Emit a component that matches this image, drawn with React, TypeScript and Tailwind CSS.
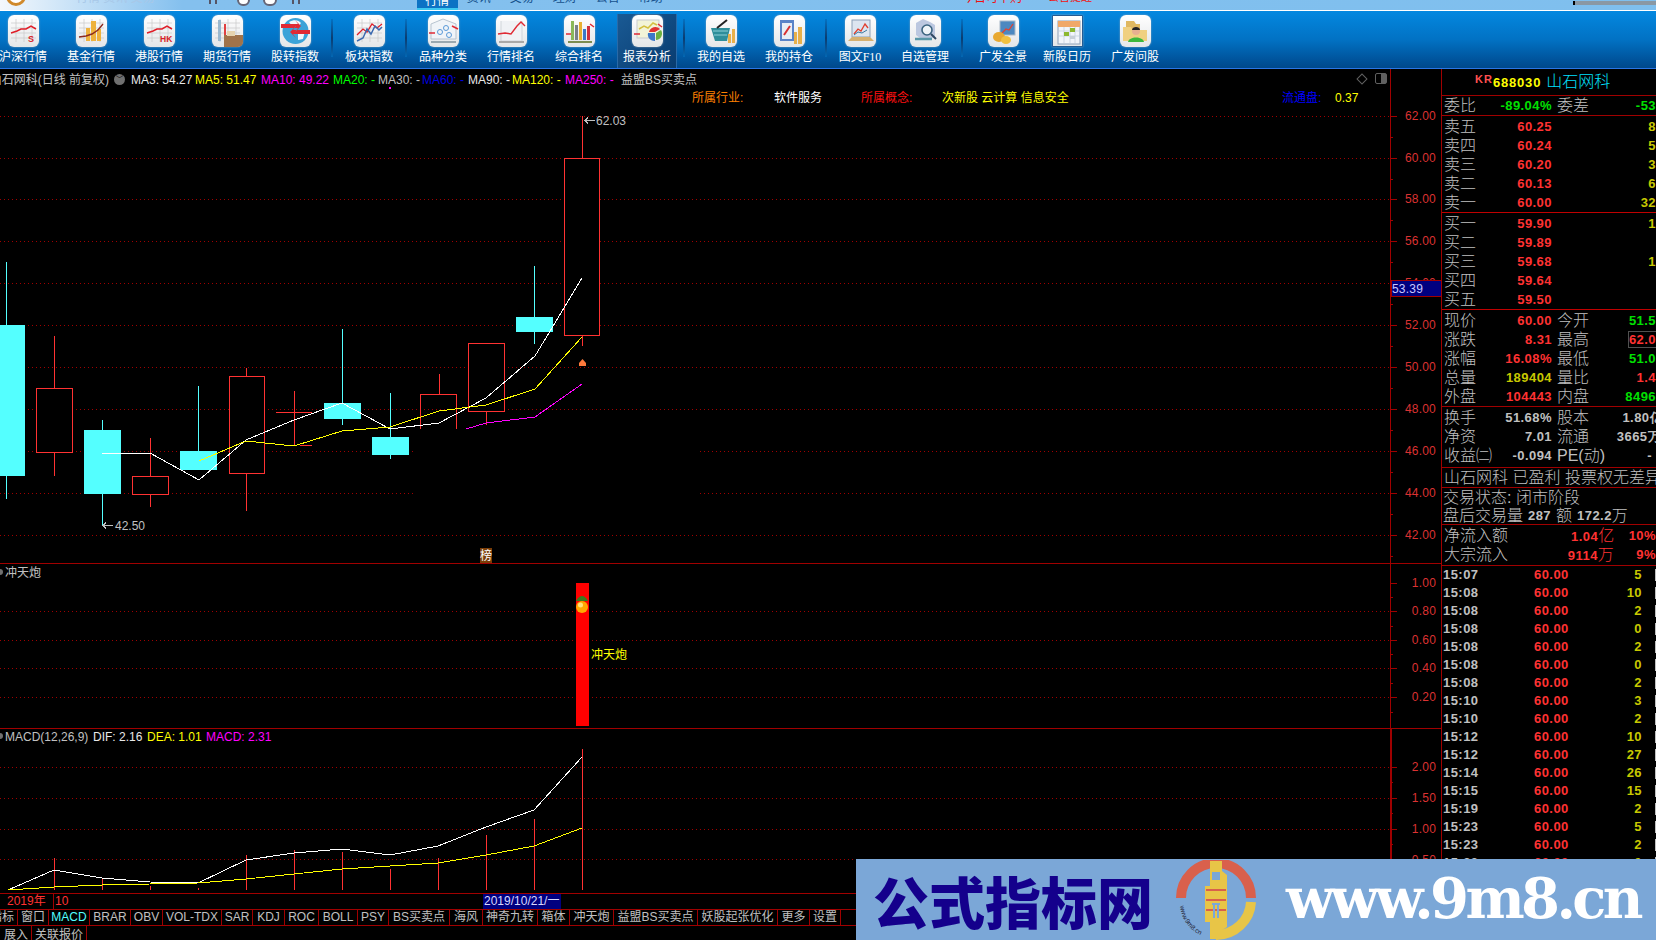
import React from 'react';

const LATIN = 'font-["Liberation_Sans","Noto_Sans_CJK_SC",sans-serif]';
const NUM = 'font-["Liberation_Sans",sans-serif] font-bold text-[13px] tracking-[0.45px]';

const RED = '#ff3232';
const CYAN = '#54ffff';
const GRID = '#a00000';

const ChartGrid = ({ x2 = 1390, lines, ticks }: { x2?: number; lines: { y: number; from?: number; to?: number }[]; ticks: number[] }) => (
  <g shapeRendering="crispEdges">
    {lines.map((l, i) => (
      <line key={i} x1={l.from ?? 0} x2={l.to ?? x2} y1={l.y + 0.5} y2={l.y + 0.5} stroke={GRID} strokeDasharray="1 3" />
    ))}
    {ticks.map((y, i) => (
      <line key={i} x1={1390} x2={i % 2 === 0 ? 1397 : 1393} y1={y + 0.5} y2={y + 0.5} stroke={GRID} />
    ))}
  </g>
);

const AxisLabels = ({ items }: { items: [string, number][] }) => (
  <g fontFamily="Liberation Sans" fontSize="12" fill="#dc3232">
    {items.map(([t, y]) => (
      <text key={t} x={1436} y={y + 4} textAnchor="end" letterSpacing="0.2">
        {t}
      </text>
    ))}
  </g>
);

const candles = [
  { up: false, x: 0, w: 25, t: 325, b: 476, wx: 6, wt: 262, wb: 499 },
  { up: true, x: 36, w: 37, t: 388, b: 452, wx: 54, wt: 336, wb: 476 },
  { up: false, x: 84, w: 37, t: 430, b: 494, wx: 102, wt: 420, wb: 525 },
  { up: true, x: 132, w: 37, t: 476, b: 494, wx: 150, wt: 438, wb: 507 },
  { up: false, x: 180, w: 37, t: 451, b: 470, wx: 198, wt: 386, wb: 470 },
  { up: true, x: 229, w: 36, t: 376, b: 473, wx: 246, wt: 368, wb: 511 },
  { up: true, x: 276, w: 36, t: 412, b: 412, wx: 294, wt: 391, wb: 445 },
  { up: false, x: 324, w: 37, t: 403, b: 419, wx: 342, wt: 329, wb: 425 },
  { up: false, x: 372, w: 37, t: 437, b: 455, wx: 390, wt: 393, wb: 459 },
  { up: true, x: 420, w: 37, t: 394, b: 429, wx: 439, wt: 374, wb: 394, open: true },
  { up: true, x: 468, w: 37, t: 343, b: 411, wx: 486, wt: 343, wb: 425 },
  { up: false, x: 516, w: 37, t: 317, b: 332, wx: 534, wt: 266, wb: 344 },
  { up: true, x: 564, w: 36, t: 158, b: 335, wx: 582, wt: 116, wb: 346 },
];

const PriceChart = () => (
  <svg width="1441" height="494" viewBox="0 69 1441 494" className="block">
    <ChartGrid
      lines={[
        { y: 116 }, { y: 158 }, { y: 199 }, { y: 241 }, { y: 283 }, { y: 325 }, { y: 367 }, { y: 409 },
        { y: 451, to: 414 }, { y: 451, from: 700 }, { y: 493, to: 414 }, { y: 493, from: 700 }, { y: 535 },
      ]}
      ticks={[116, 137, 158, 179, 199, 220, 241, 262, 283, 304, 325, 346, 367, 388, 409, 430, 451, 472, 493, 514, 535, 556]}
    />
    <g shapeRendering="crispEdges">
      {candles.map((c, i) => {
        const color = c.up ? RED : CYAN;
        return (
          <g key={i}>
            <line x1={c.wx + 0.5} x2={c.wx + 0.5} y1={c.wt} y2={c.wb} stroke={color} />
            {c.up ? (
              c.t === c.b ? (
                <line x1={c.x} x2={c.x + c.w} y1={c.t + 0.5} y2={c.t + 0.5} stroke={color} />
              ) : c.open ? (
                <path d={`M${c.x + 0.5} ${c.b}V${c.t + 0.5}H${c.x + c.w - 0.5}V${c.b}`} fill="none" stroke={color} />
              ) : (
                <rect x={c.x + 0.5} y={c.t + 0.5} width={c.w - 1} height={c.b - c.t} fill="#000" stroke={color} />
              )
            ) : (
              <rect x={c.x} y={c.t} width={c.w} height={c.b - c.t} fill={color} />
            )}
          </g>
        );
      })}
      <polyline
        points="102,453 150,453 199,480 246,440 294,420 342,403 390,429 439,423 486,398 535,356 582,278"
        fill="none"
        stroke="#fff"
      />
      <polyline
        points="199,461 246,441 294,446 342,431 390,427 439,411 486,405 535,389 582,337"
        fill="none"
        stroke="#ffff00"
      />
      <polyline points="466,429 486,423 535,417 582,384" fill="none" stroke="#ff00ff" />
      <line x1="1390.5" x2="1390.5" y1="69" y2="563" stroke={GRID} />
      <line x1="300" x2="312" y1="445.5" y2="445.5" stroke={RED} />
      <rect x="389" y="87" width="2" height="2" fill="#ff00ff" />
    </g>
    <path d="M579 363l3.5-4 3.5 4v3h-7z" fill="#ff7a3c" />
    <g fill="#c0c0c0" fontFamily="Liberation Sans" fontSize="12">
      <path d="M113 525.5h-10m3-3l-3 3 3 3" fill="none" stroke="#c0c0c0" shapeRendering="crispEdges" />
      <text x="115" y="530">42.50</text>
      <path d="M595 120.5h-10m3-3l-3 3 3 3" fill="none" stroke="#c0c0c0" shapeRendering="crispEdges" />
      <text x="596" y="125">62.03</text>
    </g>
    <rect x="480" y="548" width="12" height="15" fill="#7a3d08" />
    <text x="480" y="560" fontSize="12" fill="#fff" fontFamily="Noto Sans CJK SC">榜</text>
    <AxisLabels
      items={[
        ['62.00', 116], ['60.00', 158], ['58.00', 199], ['56.00', 241], ['54.00', 283], ['52.00', 325],
        ['50.00', 367], ['48.00', 409], ['46.00', 451], ['44.00', 493], ['42.00', 535],
      ]}
    />
    <rect x="1391" y="280.5" width="50" height="16" fill="#000080" stroke={GRID} shapeRendering="crispEdges" />
    <text x="1392" y="293" fontFamily="Liberation Sans" fontSize="12" fill="#c8c8ff" letterSpacing="0.2">53.39</text>
  </svg>
);

const SignalChart = () => (
  <svg width="1441" height="164" viewBox="0 564 1441 164" className="block">
    <ChartGrid lines={[{ y: 611 }, { y: 640 }, { y: 668 }, { y: 697 }]} ticks={[583, 597, 611, 626, 640, 654, 668, 683, 697, 712]} />
    <line x1="1390.5" x2="1390.5" y1="564" y2="728" stroke={GRID} shapeRendering="crispEdges" />
    <rect x="576" y="583" width="13" height="143" fill="#ff0000" />
    <path d="M582 596c-2 0-5 2-6 5h12c-1-3-4-5-6-5z" fill="#3c7a1e" />
    <circle cx="582" cy="607" r="6" fill="#ffa800" />
    <circle cx="580.5" cy="605" r="2.5" fill="#ffe27a" />
    <text x="591" y="659" fontSize="12" fill="#ffff00" fontFamily="Noto Sans CJK SC">冲天炮</text>
    <circle cx="0" cy="572" r="3" fill="#707070" />
    <AxisLabels items={[['1.00', 583], ['0.80', 611], ['0.60', 640], ['0.40', 668], ['0.20', 697]]} />
  </svg>
);

const macdBars: [number, number][] = [
  [54, 858], [102, 878], [150, 886], [198, 888], [246, 855], [294, 850],
  [342, 852], [390, 869], [438, 858], [486, 835], [534, 819], [582, 749],
];

const MacdChart = () => (
  <svg width="1441" height="161" viewBox="0 729 1441 161" className="block">
    <ChartGrid lines={[{ y: 767 }, { y: 798 }, { y: 829 }, { y: 859 }]} ticks={[767, 782, 798, 813, 829, 844, 859, 875]} />
    <g shapeRendering="crispEdges">
      {macdBars.map(([x, y]) => (
        <line key={x} x1={x + 0.5} x2={x + 0.5} y1={y} y2={890} stroke={RED} />
      ))}
      <polyline points="8,890 54,870 102,878 150,882 198,883 246,860 294,853 342,849 390,855 438,846 486,827 534,810 582,757" fill="none" stroke="#fff" />
      <polyline points="8,890 54,887 102,885 150,884 198,883 246,879 294,874 342,869 390,866 438,863 486,855 534,846 582,828" fill="none" stroke="#ffff00" />
      <rect x="1390" y="729" width="2" height="161" fill={GRID} />
    </g>
    <circle cx="0" cy="736" r="3" fill="#707070" />
    <AxisLabels items={[['2.00', 767], ['1.50', 798], ['1.00', 829], ['0.50', 860]]} />
  </svg>
);

const GridLines = () => (
  <path d="M3 8h25M3 13h25M3 18h25M3 23h25M8 4v23M16 4v23M24 4v23" stroke="#c9c9c9" strokeWidth="0.7" fill="none" />
);

const icons: Record<string, React.ReactNode> = {
  sh: (
    <>
      <GridLines />
      <polyline points="3,18 9,16 13,14 18,14 23,11 28,14" fill="none" stroke="#e01e28" strokeWidth="1.5" />
      <text x="20" y="27" fontSize="9" fontWeight="700" fill="#d81e28" fontFamily="Liberation Sans">S</text>
    </>
  ),
  fund: (
    <>
      <GridLines />
      <path d="M10 26V13h4v13zM15 26V6h5v20zM21 26V14h4v12z" fill="#eeb23c" />
      <polyline points="3,22 10,21 16,19 22,15 27,9" fill="none" stroke="#8c2a1e" strokeWidth="1.4" />
    </>
  ),
  hk: (
    <>
      <GridLines />
      <polyline points="3,18 9,16 13,14 18,14 23,11 28,14" fill="none" stroke="#e01e28" strokeWidth="1.5" />
      <text x="16" y="27" fontSize="8.5" fontWeight="700" fill="#d81e28" fontFamily="Liberation Sans">HK</text>
    </>
  ),
  futures: (
    <>
      <GridLines />
      <rect x="6" y="5" width="3" height="21" fill="#9bb9cf" />
      <rect x="12" y="9" width="2" height="15" fill="#e04040" />
      <rect x="12" y="20" width="19" height="13" fill="#a0734a" />
      <rect x="15" y="16" width="8" height="5" fill="#e6d3ae" />
    </>
  ),
  globe: (
    <>
      <circle cx="15.5" cy="16" r="13" fill="#3ba3d8" />
      <path d="M9 7c5-3 10-2 12 1l-3 4-6-1zM18 18l7-2-2 8-5 1z" fill="#f2f7fb" />
      <path d="M1 9h17l-3-4 6 6-6 6 3-4H1zM30 15H13l3-4-6 6 6 6-3-4h17z" fill="#e02a34" />
    </>
  ),
  sector: (
    <>
      <GridLines />
      <polyline points="3,20 9,14 13,17 18,9 23,13 28,9" fill="none" stroke="#e01e28" strokeWidth="1.3" />
      <polyline points="3,26 9,23 13,14 17,19 21,11 25,15 28,12" fill="none" stroke="#3c6ab0" strokeWidth="1.5" />
    </>
  ),
  category: (
    <>
      <path d="M3 9l12-5 13 5v15H3z" fill="#f0f4f8" stroke="#b8c4d0" />
      <circle cx="12" cy="17" r="2.5" fill="none" stroke="#5a9ad8" />
      <circle cx="18" cy="13" r="2.5" fill="none" stroke="#5a9ad8" />
      <circle cx="21" cy="20" r="2.5" fill="none" stroke="#5a9ad8" />
      <path d="M1 18h6M24 11l6 3" stroke="#e02a34" strokeWidth="1.6" />
      <path d="M3 27h25" stroke="#9aa8b0" strokeWidth="2" />
    </>
  ),
  rank: (
    <>
      <path d="M5 6v20h21V6" fill="#f0f2f5" stroke="#d0d5da" />
      <polyline points="2,19 9,18 15,19 21,11 25,7 29,11" fill="none" stroke="#e02a34" strokeWidth="1.4" />
      <path d="M3 27h25" stroke="#a8a8a8" strokeWidth="2" />
    </>
  ),
  bars: (
    <>
      <rect x="7" y="6" width="3" height="19" fill="#8ab85a" />
      <rect x="11" y="10" width="3" height="15" fill="#7a8088" />
      <rect x="15" y="7" width="3" height="18" fill="#e8b030" />
      <rect x="19" y="14" width="3" height="11" fill="#3c78c8" />
      <rect x="23" y="11" width="3" height="14" fill="#d03040" />
      <path d="M2 19h5M26 9l4 3" stroke="#e02a34" strokeWidth="1.5" />
      <path d="M4 27h24" stroke="#7c8c50" strokeWidth="2" />
    </>
  ),
  report: (
    <>
      <rect x="5" y="5" width="22" height="18" fill="#f2f4d8" stroke="#c8ccd0" />
      <polyline points="7,14 12,11 16,13 21,8 25,10" fill="none" stroke="#d4c040" strokeWidth="1.5" />
      <path d="M2 19h6M26 9l4 3" stroke="#e02a34" strokeWidth="1.5" />
      <path d="M23 26a6.5 6.5 0 0 1-7-8h7z" fill="#3c78c8" />
      <path d="M23 17h-6a6.5 6.5 0 0 1 11-3z" fill="#e03030" />
      <path d="M24 18l5-3a6.5 6.5 0 0 1-5 10z" fill="#6cb040" />
    </>
  ),
  basket: (
    <>
      <path d="M5 13h19l-3 13H9z" fill="#2e8e9a" />
      <path d="M7 16h15M8 20h13" stroke="#8cd0d8" strokeWidth="1" />
      <path d="M11 13l10-8" stroke="#222" strokeWidth="2" />
      <path d="M22 28v-9h3v9zM26 28v-14h3v14z" fill="#e8b04a" />
    </>
  ),
  hold: (
    <>
      <rect x="6" y="5" width="14" height="21" fill="#5a84c8" />
      <rect x="8" y="8" width="10" height="16" fill="#e8eef5" />
      <path d="M10 20l6-9" stroke="#d83030" strokeWidth="2" />
      <path d="M20 29V17h3v12zM24 29V12h4v17z" fill="#e8b04a" />
    </>
  ),
  f10: (
    <>
      <rect x="7" y="5" width="18" height="17" fill="#dde5f0" stroke="#8ca0b8" />
      <polyline points="9,19 13,14 16,16 20,9 23,13" fill="none" stroke="#e04030" strokeWidth="1.3" />
      <polyline points="9,20 13,17 17,18 22,15" fill="none" stroke="#3c78a0" strokeWidth="1" />
      <path d="M3 26l4-4h18l4 4z" fill="#d6b070" />
    </>
  ),
  manage: (
    <>
      <path d="M6 20V8l7-4 7 3 5 3v13H10z" fill="#bcc8e0" />
      <circle cx="17" cy="15" r="5" fill="#eef4f8" stroke="#3c6480" strokeWidth="1.6" />
      <path d="M21 19l5 5" stroke="#2e4860" strokeWidth="2" />
      <path d="M5 24h17" stroke="#5a98a8" strokeWidth="2.5" />
    </>
  ),
  panorama: (
    <>
      <rect x="12" y="6" width="15" height="14" fill="#4c88c0" stroke="#a8b8c8" />
      <polyline points="14,18 18,14 21,15 25,9" fill="none" stroke="#e04030" strokeWidth="1.3" />
      <ellipse cx="11" cy="22" rx="6" ry="5" fill="#e8a830" />
      <ellipse cx="18" cy="25" rx="5" ry="4" fill="#f0c040" />
    </>
  ),
  calendar: (
    <>
      <rect x="5" y="5" width="22" height="23" fill="#f2f5fa" stroke="#8ca0b8" />
      <rect x="5" y="5" width="22" height="6" fill="#f0a868" />
      <path d="M5 15h22M5 20h22M11 11v17M17 11v17M22 11v17" stroke="#c0ccd8" strokeWidth="0.7" />
      <rect x="11" y="16" width="5" height="4" fill="#8cb830" />
      <rect x="17" y="12" width="5" height="4" fill="#8cb830" />
      <rect x="17" y="20" width="5" height="3" fill="#c8d0d8" />
    </>
  ),
  ask: (
    <>
      <path d="M6 6h8l2 3h4v16H6z" fill="#e0b860" />
      <path d="M3 12h8l2 3h14v11H3z" fill="#f0d080" />
      <circle cx="16" cy="16" r="4" fill="#e8b090" />
      <path d="M12 15c0-4 8-4 8 0z" fill="#222" />
      <path d="M8 27c1-6 15-6 16 0z" fill="#3cb83c" />
    </>
  ),
};

const toolbar: { label: React.ReactNode; icon: string; cls: string; active?: boolean; sep?: boolean }[] = [
  { label: '沪深行情', icon: 'sh', cls: 'w-[68px]' },
  { label: '基金行情', icon: 'fund', cls: 'w-[68px]' },
  { label: '港股行情', icon: 'hk', cls: 'w-[68px]' },
  { label: '期货行情', icon: 'futures', cls: 'w-[68px]' },
  { label: '股转指数', icon: 'globe', cls: 'w-[68px]', sep: true },
  { label: '板块指数', icon: 'sector', cls: 'w-[68px]', sep: true },
  { label: '品种分类', icon: 'category', cls: 'w-[68px]' },
  { label: '行情排名', icon: 'rank', cls: 'w-[68px]' },
  { label: '综合排名', icon: 'bars', cls: 'w-[68px]' },
  { label: '报表分析', icon: 'report', cls: 'w-[60px] mx-[4px]', active: true, sep: true },
  { label: '我的自选', icon: 'basket', cls: 'w-[68px]' },
  { label: '我的持仓', icon: 'hold', cls: 'w-[68px]', sep: true },
  { label: <>图文<span className="font-['Liberation_Serif',serif]">F10</span></>, icon: 'f10', cls: 'w-[62px]' },
  { label: '自选管理', icon: 'manage', cls: 'w-[68px]', sep: true },
  { label: '广发全景', icon: 'panorama', cls: 'w-[76px]' },
  { label: '新股日历', icon: 'calendar', cls: 'w-[52px]' },
  { label: '广发问股', icon: 'ask', cls: 'w-[84px]' },
];

const Toolbar = () => (
  <div className="flex h-[58px] border-b border-[#2a76e6] bg-gradient-to-b from-[#0488e0] via-[#0272c4] to-[#00488c] overflow-hidden">
    <div className="flex -ml-[11px] mt-[3px] h-[54px]">
      {toolbar.map((t) => (
        <React.Fragment key={t.icon}>
          <div className={`${t.cls} flex flex-col items-center ${t.active ? 'bg-gradient-to-br from-[#1a5a94] to-[#083c70] border-x border-[#2a6aa8]' : ''}`}>
            <div className={`w-[31px] h-[32px] mt-[1px] shrink-0 bg-gradient-to-b from-white to-[#e4e6e8] shadow-[0_0_2px_#9ab] ${t.icon === 'calendar' ? 'rounded-[1px] border border-[#245c94]' : 'rounded-[6px]'}`}>
              <svg width="31" height="32" viewBox="0 0 31 32" className="overflow-hidden rounded-[5px]">
                {icons[t.icon]}
              </svg>
            </div>
            <span className={`${LATIN} mt-[2px] text-[12px] leading-[17px] text-white whitespace-nowrap`}>{t.label}</span>
          </div>
          {t.sep && <div className="mx-[2px] w-[2px] h-[38px] mt-[5px] bg-gradient-to-b from-[#0272c4] via-[#0a3c70] to-[#0268b4]" />}
        </React.Fragment>
      ))}
    </div>
  </div>
);

const TopStrip = () => (
  <div className="relative h-[11px] border-b border-white overflow-hidden bg-gradient-to-r from-[#f4f8fc] from-0% via-[#84c0ee] via-[11%] to-[#7fbfee] flex">
    <div className="w-[20px] h-[20px] -mt-[14px] ml-[6px] rounded-full border-[3px] border-[#d08a2c] bg-white" />
    <span className={`${LATIN} ml-[50px] -mt-[11px] text-[12px] text-[#a8c8e8] whitespace-nowrap`}>行情 资讯 交易</span>
    <div className="flex items-start ml-[54px] -mt-[6px]">
      <div className="w-[8px] h-[10px] border-x-2 border-[#556]" />
      <div className="ml-[20px] w-[13px] h-[12px] rounded-full border-2 border-[#667] bg-white" />
      <div className="ml-[13px] w-[14px] h-[12px] rounded-full border-2 border-[#667] bg-white" />
      <div className="ml-[15px] w-[8px] h-[10px] border-x-2 border-[#556]" />
    </div>
    <div className={`${LATIN} ml-[117px] w-[41px] h-[10px] bg-[#0c72c4] border-b-2 border-[#3cc8f0] text-white text-center text-[12px] leading-[3px]`}>行情</div>
    <div className={`${LATIN} ml-[9px] -mt-[11px] flex gap-[19px] text-[12px] text-[#14508c] whitespace-nowrap`}>
      <span>资讯</span><span>交易</span><span>理财</span><span>公告</span><span>帮助</span>
    </div>
    <div className={`${LATIN} absolute left-[962px] -top-[11px] flex gap-[26px] text-[#f01010] whitespace-nowrap`}>
      <span className="text-[12px]">今日可申购</span>
      <span className="text-[11px]">公告提醒</span>
    </div>
    <div className="absolute left-[1573px] top-[1px] w-[83px] h-[4px] bg-[#8a98a4] border-l-2 border-black" />
  </div>
);

const legend: [string, string, string][] = [
  ['MA3: 54.27', 'text-[#e8e8e8]', 'w-[64px]'],
  ['MA5: 51.47', 'text-[#ffff00]', 'w-[66px]'],
  ['MA10: 49.22', 'text-[#ff00ff]', 'w-[72px]'],
  ['MA20: -', 'text-[#00ff00]', 'w-[45px]'],
  ['MA30: -', 'text-[#c0c0c0]', 'w-[44px]'],
  ['MA60: -', 'text-[#0000e0]', 'w-[46px]'],
  ['MA90: -', 'text-[#e8e8e8]', 'w-[44px]'],
  ['MA120: -', 'text-[#ffff00]', 'w-[53px]'],
  ['MA250: -', 'text-[#ff00ff]', 'w-[56px]'],
  ['益盟BS买卖点', 'text-[#c0c0c0]', 'w-[80px]'],
];

const PriceLegend = () => (
  <div className={`${LATIN} absolute inset-x-0 top-0 text-[12px]`}>
    <div className="flex items-center h-[21px] whitespace-nowrap">
      <span className="w-[123px] -ml-[14px] shrink-0 text-right text-[#c0c0c0]">山石网科(日线 前复权)</span>
      <span className="w-[11px] h-[11px] ml-[5px] mr-[6px] shrink-0 rounded-full bg-[#707070] flex items-center justify-center text-black text-[8px] leading-none">﹀</span>
      {legend.map(([t, c, w]) => (
        <span key={t} className={`${c} ${w}`}>{t}</span>
      ))}
    </div>
    <div className="flex items-center h-[14px] mt-[1px] pl-[692px] whitespace-nowrap">
      <span className="w-[82px] text-[#ff8000]">所属行业:</span>
      <span className="w-[87px] text-white">软件服务</span>
      <span className="w-[81px] text-[#ff1010]">所属概念:</span>
      <span className="w-[340px] text-[#ffff00]">次新股 云计算 信息安全</span>
      <span className="w-[53px] text-[#0000ff]">流通盘:</span>
      <span className="text-[#ffff00]">0.37</span>
    </div>
    <div className="absolute left-[1358px] top-[6px] w-[8px] h-[8px] rotate-45 border border-[#606060]" />
    <div className="absolute left-[1375px] top-[4px] w-[12px] h-[11px] rounded-[2px] border border-[#606060] bg-gradient-to-r from-transparent from-50% to-[#606060] to-50%" />
  </div>
);

const tabs: [string, string, string?][] = [
  ['指标', 'w-[18px] justify-end pr-[3px]'],
  ['窗口', 'w-[31px] justify-center'],
  ['MACD', 'w-[41px] justify-center', 'text-[#54ffff]'],
  ['BRAR', 'w-[41px] justify-center'],
  ['OBV', 'w-[32px] justify-center'],
  ['VOL-TDX', 'w-[59px] justify-center'],
  ['SAR', 'w-[31px] justify-center'],
  ['KDJ', 'w-[32px] justify-center'],
  ['ROC', 'w-[34px] justify-center'],
  ['BOLL', 'w-[39px] justify-center'],
  ['PSY', 'w-[31px] justify-center'],
  ['BS买卖点', 'w-[61px] justify-center'],
  ['海风', 'w-[33px] justify-center'],
  ['神奇九转', 'w-[55px] justify-center'],
  ['箱体', 'w-[32px] justify-center'],
  ['冲天炮', 'w-[44px] justify-center'],
  ['益盟BS买卖点', 'w-[84px] justify-center'],
  ['妖股起张优化', 'w-[80px] justify-center'],
  ['更多', 'w-[32px] justify-center'],
  ['设置', 'w-[31px] justify-center'],
];

const BottomBars = () => (
  <div className={`${LATIN} text-[12px] text-[#c0c0c0]`}>
    <div className="mt-[3px] h-[17px] border-y border-[#a00000] flex relative">
      <span className="w-[54px] pl-[7px] text-[#ff3232] border-r border-[#a00000] leading-[15px]">2019年</span>
      <span className="pl-[1px] text-[#ff3232] leading-[15px]">10</span>
      <span className="absolute left-[483px] top-0 w-[78px] h-[15px] bg-[#000080] text-[#d8d8ff] leading-[15px] pl-[1px] whitespace-nowrap">2019/10/21/一</span>
    </div>
    <div className="h-[16px] border-b border-[#a00000] flex">
      {tabs.map(([t, w, c]) => (
        <span key={t} className={`${w} ${c ?? ''} flex items-center shrink-0 border-r border-[#a00000] whitespace-nowrap overflow-hidden leading-[15px]`}>
          {t}
        </span>
      ))}
    </div>
    <div className="h-[14px] flex overflow-hidden">
      <span className="w-[32px] border-r border-[#a00000] flex justify-end pt-[2px] pr-[3px] whitespace-nowrap leading-[15px]">展入</span>
      <span className="w-[55px] border-r border-[#a00000] pt-[2px] text-center whitespace-nowrap leading-[15px]">关联报价</span>
    </div>
  </div>
);

const Label = ({ children, cls = 'w-[32px]' }: { children: React.ReactNode; cls?: string }) => (
  <span className={`${LATIN} ${cls} text-[16px] font-light text-[#c0c0c0] whitespace-nowrap`}>{children}</span>
);

type Cell = { l: string; v: string; c: string; l2?: string; v2?: string; c2?: string };

const QuoteRow = ({ l, v, c, l2, v2, c2 }: Cell) => (
  <div className="flex items-center h-[19px] pl-[2px] whitespace-nowrap">
    <Label>{l}</Label>
    <span className={`${NUM} ${c} w-[76px] text-right`}>{v}</span>
    {l2 ? <Label cls="w-[32px] ml-[5px]">{l2}</Label> : <span className="w-[37px]" />}
    <span className={`${NUM} ${c2 ?? 'text-[#c8c800]'} flex-1 text-right`}>{v2}</span>
  </div>
);

const sells: Cell[] = [
  { l: '卖五', v: '60.25', c: 'text-[#ff3232]', v2: '8' },
  { l: '卖四', v: '60.24', c: 'text-[#ff3232]', v2: '5' },
  { l: '卖三', v: '60.20', c: 'text-[#ff3232]', v2: '3' },
  { l: '卖二', v: '60.13', c: 'text-[#ff3232]', v2: '6' },
  { l: '卖一', v: '60.00', c: 'text-[#ff3232]', v2: '32' },
];

const buys: Cell[] = [
  { l: '买一', v: '59.90', c: 'text-[#ff3232]', v2: '1' },
  { l: '买二', v: '59.89', c: 'text-[#ff3232]' },
  { l: '买三', v: '59.68', c: 'text-[#ff3232]', v2: '1' },
  { l: '买四', v: '59.64', c: 'text-[#ff3232]' },
  { l: '买五', v: '59.50', c: 'text-[#ff3232]' },
];

const quote: Cell[] = [
  { l: '现价', v: '60.00', c: 'text-[#ff3232]', l2: '今开', v2: '51.5', c2: 'text-[#00e000]' },
  { l: '涨跌', v: '8.31', c: 'text-[#ff3232]', l2: '最高', v2: '62.0', c2: 'text-[#ff3232]' },
  { l: '涨幅', v: '16.08%', c: 'text-[#ff3232]', l2: '最低', v2: '51.0', c2: 'text-[#00e000]' },
  { l: '总量', v: '189404', c: 'text-[#c8c800]', l2: '量比', v2: '1.4', c2: 'text-[#ff3232]' },
  { l: '外盘', v: '104443', c: 'text-[#ff3232]', l2: '内盘', v2: '8496', c2: 'text-[#00e000]' },
];

const finance: Cell[] = [
  { l: '换手', v: '51.68%', c: 'text-[#c0c0c0]', l2: '股本', v2: '1.80亿', c2: 'text-[#c0c0c0] -mr-[7px]' },
  { l: '净资', v: '7.01', c: 'text-[#c0c0c0]', l2: '流通', v2: '3665万', c2: 'text-[#c0c0c0] -mr-[5px]' },
  { l: '收益㈡', v: '-0.094', c: 'text-[#c0c0c0]', l2: 'PE(动)', v2: '-', c2: 'text-[#c0c0c0] pr-[4px]' },
];

const trades: [string, string][] = [
  ['15:07', '5'], ['15:08', '10'], ['15:08', '2'], ['15:08', '0'], ['15:08', '2'], ['15:08', '0'],
  ['15:08', '2'], ['15:10', '3'], ['15:10', '2'], ['15:12', '10'], ['15:12', '27'], ['15:14', '26'],
  ['15:15', '15'], ['15:19', '2'], ['15:23', '5'], ['15:23', '2'], ['15:23', '0'],
];

const QuotePanel = () => (
  <div className="w-[215px] h-[871px] border-l border-[#a00000] overflow-hidden bg-black">
    <div className="h-[27px] border-b border-[#a00000] flex items-start pl-[33px] whitespace-nowrap">
      <span className={`${LATIN} w-[18px] mt-[2px] text-[11px] font-bold tracking-[1px] text-[#ff5050]`}>KR</span>
      <span className="font-['Liberation_Sans',sans-serif] mt-[4px] text-[13px] font-bold tracking-[0.8px] text-[#ffff00]">688030</span>
      <span className={`${LATIN} ml-[5px] mt-[1px] text-[16px] font-light text-[#00e0ff]`}>山石网科</span>
    </div>
    <div className="border-b border-[#a00000]">
      <QuoteRow l="委比" v="-89.04%" c="text-[#00e000]" l2="委差" v2="-53" c2="text-[#00e000]" />
    </div>
    <div className="border-b border-[#c00000] pt-[1px]">
      {sells.map((r) => <QuoteRow key={r.l} {...r} />)}
    </div>
    <div className="border-b border-[#c00000] pt-[1px]">
      {buys.map((r) => <QuoteRow key={r.l} {...r} />)}
    </div>
    <div className="relative border-b border-[#a00000] pt-[1px]">
      {quote.map((r) => <QuoteRow key={r.l} {...r} />)}
      <div className="absolute left-[186px] top-[21px] w-[30px] h-[17px] border border-[#505050]" />
    </div>
    <div className="border-b border-[#a00000] pt-[1px] pb-[2px]">
      {finance.map((r) => <QuoteRow key={r.l} {...r} />)}
    </div>
    <div className="h-[20px] border-b border-[#a00000] pl-[2px] flex items-center">
      <Label cls="w-[220px]">山石网科 已盈利 投票权无差异</Label>
    </div>
    <div className="border-b border-[#a00000] pt-[1px] h-[37px] whitespace-nowrap">
      <div className="h-[18px] flex items-center pl-[1px]">
        <Label cls="w-[180px]">交易状态: 闭市阶段</Label>
      </div>
      <div className="h-[18px] flex items-center pl-[1px]">
        <Label cls="w-[80px]">盘后交易量</Label>
        <span className={`${NUM} text-[#c0c0c0] ml-[5px]`}>287</span>
        <Label cls="w-[16px] ml-[5px]">额</Label>
        <span className={`${NUM} text-[#c0c0c0] ml-[5px]`}>172.2</span>
        <Label cls="w-[16px]">万</Label>
        <span className="ml-[29px] w-[8px] h-[12px] border border-[#a00000] rounded-[2px] shrink-0" />
      </div>
    </div>
    <div className="border-b border-[#a00000] pt-[1px] pb-[1px]">
      <div className="flex items-center h-[19px] pl-[2px] whitespace-nowrap">
        <Label cls="w-[64px]">净流入额</Label>
        <span className={`${NUM} text-[#ff3232] w-[117px] text-right`}>1.04<span className={`${LATIN} text-[16px] font-light`}>亿</span></span>
        <span className={`${NUM} text-[#ff3232] ml-[14px]`}>10%</span>
      </div>
      <div className="flex items-center h-[19px] pl-[2px] whitespace-nowrap">
        <Label cls="w-[64px]">大宗流入</Label>
        <span className={`${NUM} text-[#ff3232] w-[117px] text-right`}>9114<span className={`${LATIN} text-[16px] font-light`}>万</span></span>
        <span className={`${NUM} text-[#ff3232] ml-[22px]`}>9%</span>
      </div>
    </div>
    <div className="pl-[1px]">
      {trades.map(([time, vol], i) => (
        <div key={i} className="flex items-center h-[18px] whitespace-nowrap">
          <span className={`${NUM} text-[#c0c0c0] w-[91px]`}>{time}</span>
          <span className={`${NUM} text-[#ff3232] w-[36px]`}>60.00</span>
          <span className={`${NUM} text-[#c8c800] w-[72px] text-right`}>{vol}</span>
          <span className="ml-[13px] w-[1px] h-[12px] bg-[#c0c0c0]" />
        </div>
      ))}
    </div>
  </div>
);

const Banner = () => (
  <div className="absolute left-[856px] top-[859px] w-[800px] h-[81px] bg-[#7ba7d7] flex items-center overflow-hidden">
    <span className="ml-[17px] w-[281px] shrink-0 font-['Noto_Sans_CJK_SC',sans-serif] font-black text-[56px] leading-none text-[#14008c] whitespace-nowrap">
      公式指标网
    </span>
    <svg width="80" height="80" viewBox="0 0 80 80" className="ml-[22px] shrink-0">
      <defs>
        <path id="logo-arc" d="M4 46A36 36 0 0 0 34 78" />
      </defs>
      <path d="M5 38A35 35 0 0 1 75 38" fill="none" stroke="#d9604c" strokeWidth="10" />
      <path d="M75 42A35 35 0 0 1 40 75" fill="none" stroke="#e8c547" strokeWidth="10" />
      <path d="M34 1h12v10l5 4v52l-5 3v9H34V62H29V26h5z" fill="#e8c547" />
      <path d="M30 30h20M30 40h20M30 50h20" stroke="#d9604c" strokeWidth="2" />
      <path d="M36 12h8v8h-8z" fill="#7ba7d7" />
      <path d="M36 44l8 0M38 44v14M42 44v14" stroke="#7ba7d7" strokeWidth="2" />
      <text fontSize="6.5" fill="#223" fontFamily="Liberation Sans">
        <textPath href="#logo-arc">www.9m8.cn</textPath>
      </text>
    </svg>
    <span className="ml-[30px] -mt-[4px] font-['DejaVu_Serif',serif] font-bold text-[56px] leading-none tracking-[-3.6px] text-white whitespace-nowrap">
      www.9m8.cn
    </span>
  </div>
);

export default function App() {
  return (
    <div className="relative w-[1656px] h-[940px] overflow-hidden bg-black">
      <TopStrip />
      <Toolbar />
      <div className="flex">
        <div className="w-[1441px] shrink-0">
          <div className="relative border-b border-[#a00000]">
            <PriceChart />
            <PriceLegend />
          </div>
          <div className="relative border-b border-[#a00000]">
            <SignalChart />
            <span className={`${LATIN} absolute left-[5px] top-0 text-[12px] text-[#c0c0c0]`}>冲天炮</span>
          </div>
          <div className="relative">
            <MacdChart />
            <div className={`${LATIN} absolute left-[5px] -top-[1px] flex text-[12px] whitespace-nowrap`}>
              <span className="w-[88px] text-[#c0c0c0]">MACD(12,26,9)</span>
              <span className="w-[54px] text-[#e8e8e8]">DIF: 2.16</span>
              <span className="w-[59px] text-[#ffff00]">DEA: 1.01</span>
              <span className="text-[#ff00ff]">MACD: 2.31</span>
            </div>
          </div>
          <BottomBars />
        </div>
        <QuotePanel />
      </div>
      <Banner />
    </div>
  );
}
